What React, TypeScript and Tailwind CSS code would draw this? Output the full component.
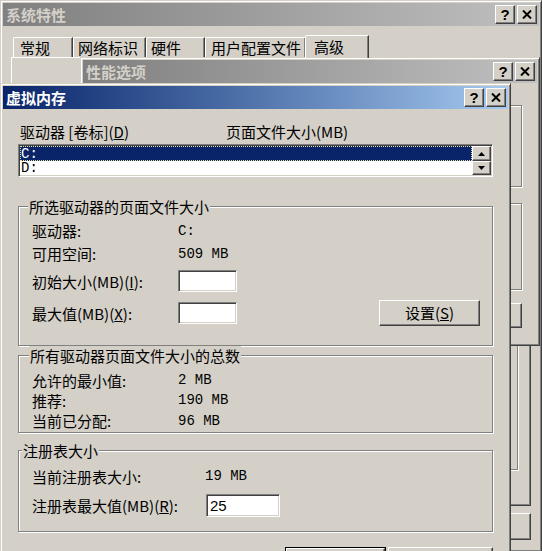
import React from 'react';

const CJK = "font-['Noto_Sans_CJK_SC',sans-serif]";
const MONO = "font-['Liberation_Mono','Noto_Sans_CJK_SC',monospace]";

const raised =
  'bg-[#d4d0c8] border border-t-white border-l-white border-r-[#404040] border-b-[#404040] shadow-[inset_-1px_-1px_0_#808080]';
const sunken =
  'bg-white border border-t-[#808080] border-l-[#808080] border-r-white border-b-white shadow-[inset_1px_1px_0_#404040,inset_-1px_-1px_0_#d4d0c8]';
const etched = 'border border-[#808080] shadow-[inset_1px_1px_0_#fff,1px_1px_0_#fff]';

const CloseGlyph = () => (
  <svg width="10" height="9" viewBox="0 0 10 9">
    <path d="M1 0.5 L9 8.5 M9 0.5 L1 8.5" stroke="#000" strokeWidth="2" />
  </svg>
);

const TitleBtn: React.FC<{ children: React.ReactNode; className?: string }> = ({ children, className = '' }) => (
  <div className={`w-[20px] h-[19px] flex items-center justify-center ${raised} ${className}`}>{children}</div>
);

const Win: React.FC<{
  title: string;
  active?: boolean;
  className: string;
  children?: React.ReactNode;
}> = ({ title, active, className, children }) => (
  <div
    className={`absolute flex flex-col bg-[#d4d0c8] border border-t-[#d4d0c8] border-l-[#d4d0c8] border-r-[#404040] border-b-[#404040] shadow-[inset_1px_1px_0_#fff,inset_-1px_-1px_0_#808080] p-[2px] ${className}`}
  >
    <div
      className={`h-[23px] shrink-0 flex items-center pl-[3px] pr-[2px] ${
        active
          ? 'bg-linear-to-r from-[#0a246a] to-[#a6caf0] text-white'
          : 'bg-linear-to-r from-[#808080] to-[#c0c0c0] text-[#d4d0c8]'
      }`}
    >
      <span className="flex-1 font-bold text-[15px] leading-none">{title}</span>
      <TitleBtn>
        <span className="font-['Liberation_Sans',sans-serif] font-bold text-[15px] leading-none text-black">?</span>
      </TitleBtn>
      <TitleBtn className="ml-[2px]">
        <CloseGlyph />
      </TitleBtn>
    </div>
    {children}
  </div>
);

const Group: React.FC<{ title?: string; titleLeft?: string; className: string; children?: React.ReactNode }> = ({
  title,
  titleLeft = 'left-[9px]',
  className,
  children,
}) => (
  <div className={`relative shrink-0 ${etched} ${className}`}>
    {title && (
      <span className={`absolute top-[-10px] ${titleLeft} bg-[#d4d0c8] px-[1px] text-[15px] leading-[20px]`}>
        {title}
      </span>
    )}
    {children}
  </div>
);

const Tab: React.FC<{ children: React.ReactNode; className: string; selected?: boolean }> = ({
  children,
  className,
  selected,
}) => (
  <div
    className={`flex items-center bg-[#d4d0c8] border-t border-l border-t-white border-l-white border-r border-r-[#404040] rounded-tl-[2px] shadow-[inset_-1px_0_0_#808080] text-[15px] leading-none ${
      selected ? 'h-[23px] relative z-10 -mb-[1px] -ml-[1px] pb-[2px]' : 'h-[20px]'
    } ${className}`}
  >
    {children}
  </div>
);

const Arrow: React.FC<{ down?: boolean }> = ({ down }) => (
  <svg width="7" height="4" viewBox="0 0 7 4">
    <path d={down ? 'M0 0 H7 L3.5 4 Z' : 'M0 4 H7 L3.5 0 Z'} fill="#000" />
  </svg>
);

const Btn: React.FC<{ children: React.ReactNode; className: string; def?: boolean }> = ({ children, className, def }) =>
  def ? (
    <div className={`border border-black ${className}`}>
      <div className={`w-full h-full flex items-center justify-center text-[15px] ${raised}`}>{children}</div>
    </div>
  ) : (
    <div className={`flex items-center justify-center text-[15px] ${raised} ${className}`}>{children}</div>
  );

const SystemWindow = () => (
  <Win title="系统特性" className="left-0 top-0 w-[542px] h-[552px]">
    <div className="flex flex-col px-[8px] pt-[9px]">
      <div className="flex items-end h-[22px] pl-[2px]">
        <Tab className="w-[60px] pl-[6px]">常规</Tab>
        <Tab className="w-[73px] pl-[4px]">网络标识</Tab>
        <Tab className="w-[59px] pl-[4px]">硬件</Tab>
        <Tab className="w-[101px] pl-[5px]">用户配置文件</Tab>
        <Tab selected className="w-[64px] pl-[8px]">
          高级
        </Tab>
      </div>
      {/* the 高级 tab page, almost all of it under the two dialogs */}
      <div className="h-[449px] w-[520px] flex flex-col px-[12px] border border-t-white border-l-white border-r-[#404040] border-b-[#404040] shadow-[inset_-1px_-1px_0_#808080]">
        <Group className="mt-[40px] h-[100px]" />
        <Group className="mt-[14px] h-[90px]" />
        <Group className="mt-[14px] h-[154px]" />
      </div>
      <div className="flex justify-end gap-[6px] mt-[7px]">
        <Btn className="w-[75px] h-[27px]">确定</Btn>
        <Btn className="w-[75px] h-[27px]">取消</Btn>
        <Btn className="w-[75px] h-[27px]">
          <span className="pr-[14px]">应用</span>
        </Btn>
      </div>
    </div>
  </Win>
);

const PerfWindow = () => (
  <Win title="性能选项" className="left-[80px] top-[57px] w-[460px] h-[289px]">
    <div className="flex flex-col items-stretch pl-[12px] pr-[15px]">
      <Group title="应用程序响应" className="mt-[22px] h-[82px]" />
      <Group title="虚拟内存" className="mt-[16px] h-[87px]" />
      <Btn className="self-end mt-[13px] w-[90px] h-[25px]">更改(C)</Btn>
    </div>
  </Win>
);

const Row: React.FC<{ label: React.ReactNode; labelW: string; h: string; className?: string; children?: React.ReactNode }> = ({
  label,
  labelW,
  h,
  className = '',
  children,
}) => (
  <div className={`flex items-center ${h} ${className}`}>
    <span className={`${labelW} shrink-0 text-[15px] leading-none`}>{label}</span>
    {children}
  </div>
);

const Val: React.FC<{ children: React.ReactNode }> = ({ children }) => (
  <span className={`${MONO} text-[14px] leading-none whitespace-pre`}>{children}</span>
);

const VirtualMemory = () => (
  <Win title="虚拟内存" active className="left-0 top-[83px] w-[511px] h-[495px]">
    <div className="flex flex-col px-[15px] pt-[12px]">
      <div className="flex items-center h-[20px] text-[15px] leading-none">
        <span className="w-[208px] pl-[2px]">
          驱动器 [卷标](<u>D</u>)
        </span>
        <span>页面文件大小(MB)</span>
      </div>

      <div className={`mt-[3px] h-[33px] w-full flex p-[1px] ${sunken}`}>
        <div className={`flex-1 flex flex-col ${MONO} text-[14px] leading-none`}>
          <div className="h-[15px] flex items-center pl-[1px] bg-[#0a246a] text-white outline-1 outline-dotted outline-[#e8e0a0] -outline-offset-1">
            C:
          </div>
          <div className="h-[14px] flex items-center pl-[1px]">D:</div>
        </div>
        <div className="w-[19px] flex flex-col">
          <div className={`h-[15px] flex items-center justify-center ${raised}`}>
            <Arrow />
          </div>
          <div className={`h-[14px] flex items-center justify-center ${raised}`}>
            <Arrow down />
          </div>
        </div>
      </div>

      <Group title="所选驱动器的页面文件大小" className="mt-[29px] h-[140px] pt-[12px] pl-[13px] pr-[12px]">
        <Row label="驱动器:" labelW="w-[146px]" h="h-[23px]">
          <Val>C:</Val>
        </Row>
        <Row label="可用空间:" labelW="w-[146px]" h="h-[23px]">
          <Val>509 MB</Val>
        </Row>
        <Row
          label={
            <>
              初始大小(MB)(<u>I</u>):
            </>
          }
          labelW="w-[146px]"
          h="h-[22px]"
          className="mt-[5px]"
        >
          <div className={`w-[59px] h-[22px] ${sunken}`} />
        </Row>
        <Row
          label={
            <>
              最大值(MB)(<u>X</u>):
            </>
          }
          labelW="w-[146px]"
          h="h-[22px]"
          className="mt-[10px]"
        >
          <div className={`w-[59px] h-[22px] ${sunken}`} />
          <Btn className="ml-auto w-[101px] h-[26px]">
            <span>
              设置(<u>S</u>)
            </span>
          </Btn>
        </Row>
      </Group>

      <Group title="所有驱动器页面文件大小的总数" titleLeft="left-[10px]" className="mt-[9px] h-[78px] pt-[14px] pl-[13px]">
        <Row label="允许的最小值:" labelW="w-[146px]" h="h-[20px]">
          <Val>2 MB</Val>
        </Row>
        <Row label="推荐:" labelW="w-[146px]" h="h-[20px]">
          <Val>190 MB</Val>
        </Row>
        <Row label="当前已分配:" labelW="w-[146px]" h="h-[21px]">
          <Val>96 MB</Val>
        </Row>
      </Group>

      <Group title="注册表大小" titleLeft="left-[3px]" className="mt-[17px] h-[82px] pt-[15px] pl-[13px]">
        <Row label="当前注册表大小:" labelW="w-[173px]" h="h-[20px]">
          <Val>19 MB</Val>
        </Row>
        <Row
          label={
            <>
              注册表最大值(MB)(<u>R</u>):
            </>
          }
          labelW="w-[174px]"
          h="h-[23px]"
          className="mt-[8px]"
        >
          <div className={`w-[74px] h-[23px] flex items-center pl-[3px] ${sunken}`}>
            <span className="font-['Liberation_Sans',sans-serif] text-[15px] leading-none">25</span>
          </div>
        </Row>
      </Group>

      <div className="flex justify-end gap-[2px] mt-[15px]">
        <Btn def className="w-[101px] h-[26px]">
          确定
        </Btn>
        <Btn className="w-[105px] h-[26px]">取消</Btn>
      </div>
    </div>
  </Win>
);

export default function App() {
  return (
    <div className={`relative w-[542px] h-[551px] overflow-hidden bg-[#3a6ea5] text-black ${CJK}`}>
      <SystemWindow />
      <PerfWindow />
      <VirtualMemory />
    </div>
  );
}
